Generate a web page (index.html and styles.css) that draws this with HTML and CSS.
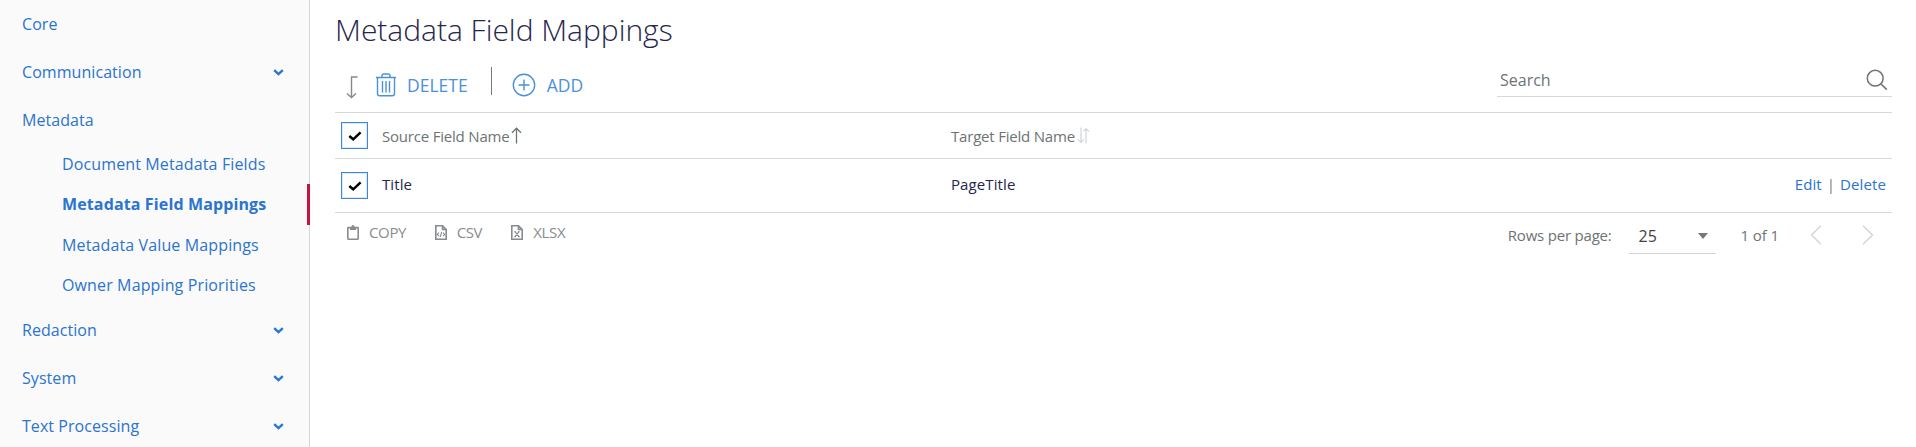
FILE: index.html
```html
<!DOCTYPE html>
<html lang="en">
<head>
<meta charset="utf-8">
<title>Metadata Field Mappings</title>
<link rel="stylesheet" href="styles.css">
</head>
<body>
<div class="app">
  <nav class="sidebar">
    <a class="nav-item"><span>Core</span></a>
    <a class="nav-item"><span>Communication</span><svg class="chevron" viewBox="0 0 11 7"><path d="M1.2 1.2 5.5 5.2 9.8 1.2"/></svg></a>
    <a class="nav-item"><span>Metadata</span></a>
    <div class="subnav">
      <a class="sub-item"><span>Document Metadata Fields</span></a>
      <a class="sub-item active"><span>Metadata Field Mappings</span></a>
      <a class="sub-item"><span>Metadata Value Mappings</span></a>
      <a class="sub-item"><span>Owner Mapping Priorities</span></a>
    </div>
    <a class="nav-item"><span>Redaction</span><svg class="chevron" viewBox="0 0 11 7"><path d="M1.2 1.2 5.5 5.2 9.8 1.2"/></svg></a>
    <a class="nav-item"><span>System</span><svg class="chevron" viewBox="0 0 11 7"><path d="M1.2 1.2 5.5 5.2 9.8 1.2"/></svg></a>
    <a class="nav-item"><span>Text Processing</span><svg class="chevron" viewBox="0 0 11 7"><path d="M1.2 1.2 5.5 5.2 9.8 1.2"/></svg></a>
  </nav>
  <main class="main">
    <h1 class="title"><span>Metadata Field Mappings</span></h1>
    <div class="toolbar">
      <svg class="turn-arrow" viewBox="0 0 12 23"><path d="M11.5 1H5.5V21.5M1 17.5 5.5 21.5 10 17.5"/></svg>
      <a class="tool delete"><svg class="trash" viewBox="0 0 22 24"><path d="M1 4.5H21M7 4V2.8Q7 1 8.800 1H13.200Q15 1 15 2.800V4M2.500 4.500V20.500Q2.500 22.800 4.800 22.800H17.200Q19.500 22.800 19.500 20.500V4.500M7.500 8V19.500M11 8V19.500M14.500 8V19.500"/></svg><span>DELETE</span></a>
      <i class="divider"></i>
      <a class="tool add"><svg class="plus" viewBox="0 0 24 24"><circle cx="12" cy="12" r="10.700"/><path d="M12 6.500V17.500M6.500 12H17.500"/></svg><span>ADD</span></a>
      <div class="search"><span>Search</span><svg viewBox="0 0 22 22"><circle cx="9.200" cy="9.200" r="7.900"/><path d="M14.800 14.800 20.800 20.600"/></svg></div>
    </div>
    <section class="table">
      <div class="row head">
        <div class="check"><svg viewBox="0 0 14 10"><path d="M1.300 5 5.200 8.300 12.600 1.400"/></svg></div>
        <div class="source"><span>Source Field Name</span><svg class="sort-up" viewBox="0 0 11 17"><path d="M5.500 16.500V1.200M1 5.700 5.500 1.200 10 5.700"/></svg></div>
        <div class="target"><span>Target Field Name</span><svg class="sort-both" viewBox="0 0 13 17"><path d="M4 .5V15.300M1 12.300 4 15.300 7 12.300M9 16.500V1.700M6.500 4.200 9 1.700 12 4.700"/></svg></div>
      </div>
      <div class="row body">
        <div class="check"><svg viewBox="0 0 14 10"><path d="M1.300 5 5.200 8.300 12.600 1.400"/></svg></div>
        <div class="source"><span>Title</span></div>
        <div class="target"><span>PageTitle</span></div>
        <div class="actions"><a>Edit</a><i>|</i><a>Delete</a></div>
      </div>
    </section>
    <footer class="footer">
      <div class="exports">
        <a class="export copy"><svg viewBox="0 0 12 15"><rect x=".8" y="2.600" width="10.400" height="11.600" rx=".6"/><path class="solid" d="M3 5V2.200H4.300Q4.500 .1 6 .1T7.700 2.200H9V5Z"/></svg><span>COPY</span></a>
        <a class="export csv"><svg viewBox="0 0 12 15"><path d="M.8 .8H7.500L11.200 4.500V14.200H.8ZM7.500 .8V4.500H11.200"/><path class="fine" d="M4 7.700 2.300 9.400 4 11.100M8 7.700 9.700 9.400 8 11.100M6.700 7 5.300 11.800"/></svg><span>CSV</span></a>
        <a class="export xlsx"><svg viewBox="0 0 12 15"><path d="M.8 .8H7.500L11.200 4.500V14.200H.8ZM7.500 .8V4.500H11.200"/><path class="fine" d="M4 6.700 8 11.700M8 6.700 4 11.700M3.200 6.700H5M7 6.700H8.800M3.200 11.700H5M7 11.700H8.800"/></svg><span>XLSX</span></a>
      </div>
      <div class="pager">
        <span class="rows-label">Rows per page:</span>
        <div class="select"><span>25</span><svg viewBox="0 0 10 6"><path d="M0 0H10L5 6Z"/></svg></div>
        <span class="range">1 of 1</span>
        <svg class="arrow" viewBox="0 0 12 20"><path d="M11 .7 1.500 10 11 19.300"/></svg>
        <svg class="arrow" viewBox="0 0 12 20"><path d="M1 .7 10.500 10 1 19.300"/></svg>
      </div>
    </footer>
  </main>
</div>
</body>
</html>
```
FILE: styles.css
```css
* { box-sizing: border-box; }
body { margin: 0; background: #fff; font-family: "Open Sans", sans-serif; overflow: hidden; }
svg { display: block; fill: none; stroke: currentColor; flex: none; }
i { font-style: normal; }

.app { display: flex; height: 447px; overflow: hidden; }
.sidebar { width: 310px; flex: none; background: #fafafa; border-right: 1px solid #d3d5d8; color: #2b74cf; font-size: 16px; letter-spacing: .06px; }
.nav-item { display: flex; align-items: center; justify-content: space-between; height: 48px; padding: 0 25px 0 22px; }
.chevron { width: 11px; height: 7px; stroke-width: 2.4; }
.subnav { padding-bottom: 1px; }
.sub-item { display: flex; align-items: center; height: 40.25px; padding-left: 62px; letter-spacing: .13px; }
.sub-item.active { font-weight: 700; border-right: 3px solid #c8143c; margin-right: -1px; }

.main { width: 1557px; margin-left: 25px; color: #6d7375; font-size: 15px; }
.title { margin: 0; height: 60px; line-height: 60px; font-size: 30px; font-weight: 300; letter-spacing: -.02px; color: #25264d; }
.toolbar { display: flex; height: 52px; }
.turn-arrow { width: 12px; height: 23px; margin: 16px 0 0 11px; color: #888; stroke-width: 1.4; }
.tool { display: flex; align-items: center; height: 50px; color: #4a90dc; font-size: 17.5px; }
.trash { width: 22px; height: 24px; stroke-width: 1.4; }
.delete { gap: 10px; margin-left: 17px; }
.divider { width: 1px; height: 28px; margin: 7px 0 0 23px; background: #777; }
.add { gap: 11px; margin-left: 20px; }
.plus { width: 24px; height: 24px; stroke-width: 1.4; }
.search { display: flex; justify-content: space-between; align-items: center; width: 395px; height: 37px; margin-left: auto; padding: 4px 4px 0 3px; border-bottom: 1px solid #d6d8da; font-size: 16px; }
.search svg { width: 22px; height: 22px; stroke-width: 1.5; }

.table { border-top: 1px solid #d6d8d9; }
.row { display: grid; grid-template-columns: 47px 569px 1fr auto; align-items: center; border-bottom: 1px solid #d6d8d9; }
.head { height: 46px; letter-spacing: -.2px; }
.body { height: 54px; color: #25264d; letter-spacing: .1px; }
.body .source, .body .target, .actions { padding-bottom: 4px; }
.check { display: grid; place-items: center; width: 27px; height: 27px; margin-left: 6px; border: 1px solid #3f86da; box-shadow: inset 0 0 0 1px #d9ecff; color: #000; }
.check svg { width: 14px; height: 10px; stroke-width: 2.5; }
.source, .target { display: flex; align-items: center; }
.sort-up { width: 11px; height: 17px; margin-left: 2px; stroke-width: 1.3; }
.sort-both { width: 13px; height: 17px; margin-left: 2px; color: #d2d4d5; stroke-width: 1.2; }
.actions { display: flex; gap: 5px; padding-right: 6px; color: #2b74cf; }
.actions i { color: #777; }

.footer { display: flex; justify-content: space-between; }
.exports { display: flex; height: 39px; align-items: center; color: #888c8e; }
.export { display: flex; align-items: center; gap: 10px; letter-spacing: -.35px; }
.export span { padding-bottom: 2px; }
.export svg { width: 12px; height: 15px; stroke-width: 1.6; }
.export .fine { stroke-width: 1.1; }
.export .solid { fill: currentColor; stroke: none; }
.copy { margin-left: 12px; }
.csv { margin-left: 28.5px; }
.xlsx { margin-left: 29px; }
.pager { display: flex; align-items: center; height: 41px; margin-right: 18px; }
.rows-label, .range { padding-top: 3px; }
.rows-label { letter-spacing: -.2px; }
.select { display: flex; align-items: center; justify-content: space-between; width: 87px; height: 41px; margin-left: 17px; padding: 5px 8px 0 10px; border-bottom: 1px solid #d3d5d6; color: #444; font-size: 16px; }
.select svg { width: 10px; height: 6px; fill: #777; stroke: none; }
.range { margin: 0 31px 0 25px; letter-spacing: -.1px; }
.arrow { width: 12px; height: 20px; margin-top: 3px; color: #d4d6d7; stroke-width: 1.5; }
.arrow + .arrow { margin-left: 40px; }
```
